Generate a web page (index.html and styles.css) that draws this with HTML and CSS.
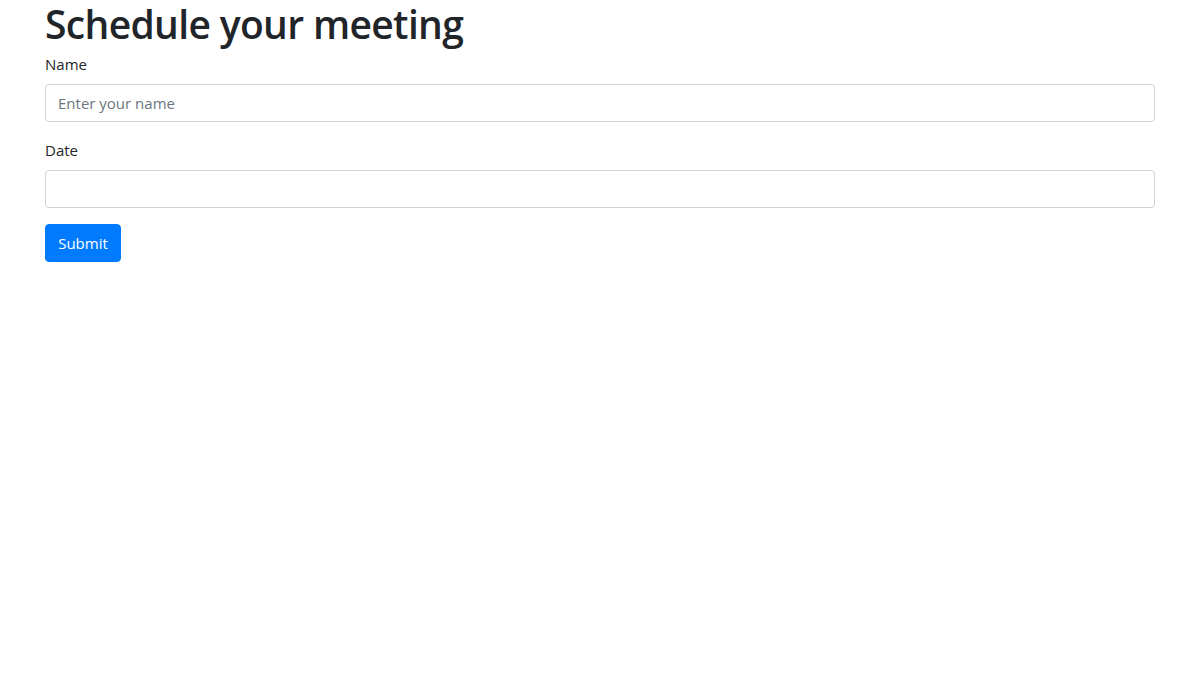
FILE: index.html
```html
<!DOCTYPE html>
<html lang="en">
<head>
<meta charset="utf-8">
<title>Schedule your meeting</title>
<link rel="stylesheet" href="styles.css">
</head>
<body>
<div class="container">
  <h1 class="title">Schedule your meeting</h1>
  <form class="form">
    <div class="form-group">
      <label class="label" for="name">Name</label>
      <input class="control" id="name" type="text" placeholder="Enter your name">
    </div>
    <div class="form-group">
      <label class="label" for="date">Date</label>
      <input class="control" id="date" type="text">
    </div>
    <button class="btn" type="button">Submit</button>
  </form>
</div>
</body>
</html>
```

FILE: styles.css
```css
* { box-sizing: border-box; }
body {
  margin: 0;
  font-family: "Open Sans", "Noto Sans", sans-serif;
  font-size: 16px;
  line-height: 24px;
  color: #212529;
  background: #fff;
}
.container {
  max-width: 1140px;
  margin: 0 auto;
  padding: 0 15px;
}
.title {
  margin: 0 0 4px;
  font-size: 39px;
  font-weight: 600;
  line-height: 48px;
  letter-spacing: -0.65px;
}
.form-group {
  margin-bottom: 16px;
}
.label {
  display: block;
  margin-bottom: 8px;
  font-size: 15px;
}
.control {
  display: block;
  width: 100%;
  height: 38px;
  padding: 6px 12px;
  font: inherit;
  font-size: 15px;
  color: #495057;
  background: #fff;
  border: 1px solid #ced4da;
  border-radius: 4px;
  outline: none;
}
.control::placeholder { color: #6c757d; }
.btn {
  display: inline-block;
  height: 38px;
  width: 76px;
  padding: 6px 12px;
  font: inherit;
  font-size: 15px;
  color: #fff;
  background: #007bff;
  border: 1px solid #007bff;
  border-radius: 4px;
}
```
